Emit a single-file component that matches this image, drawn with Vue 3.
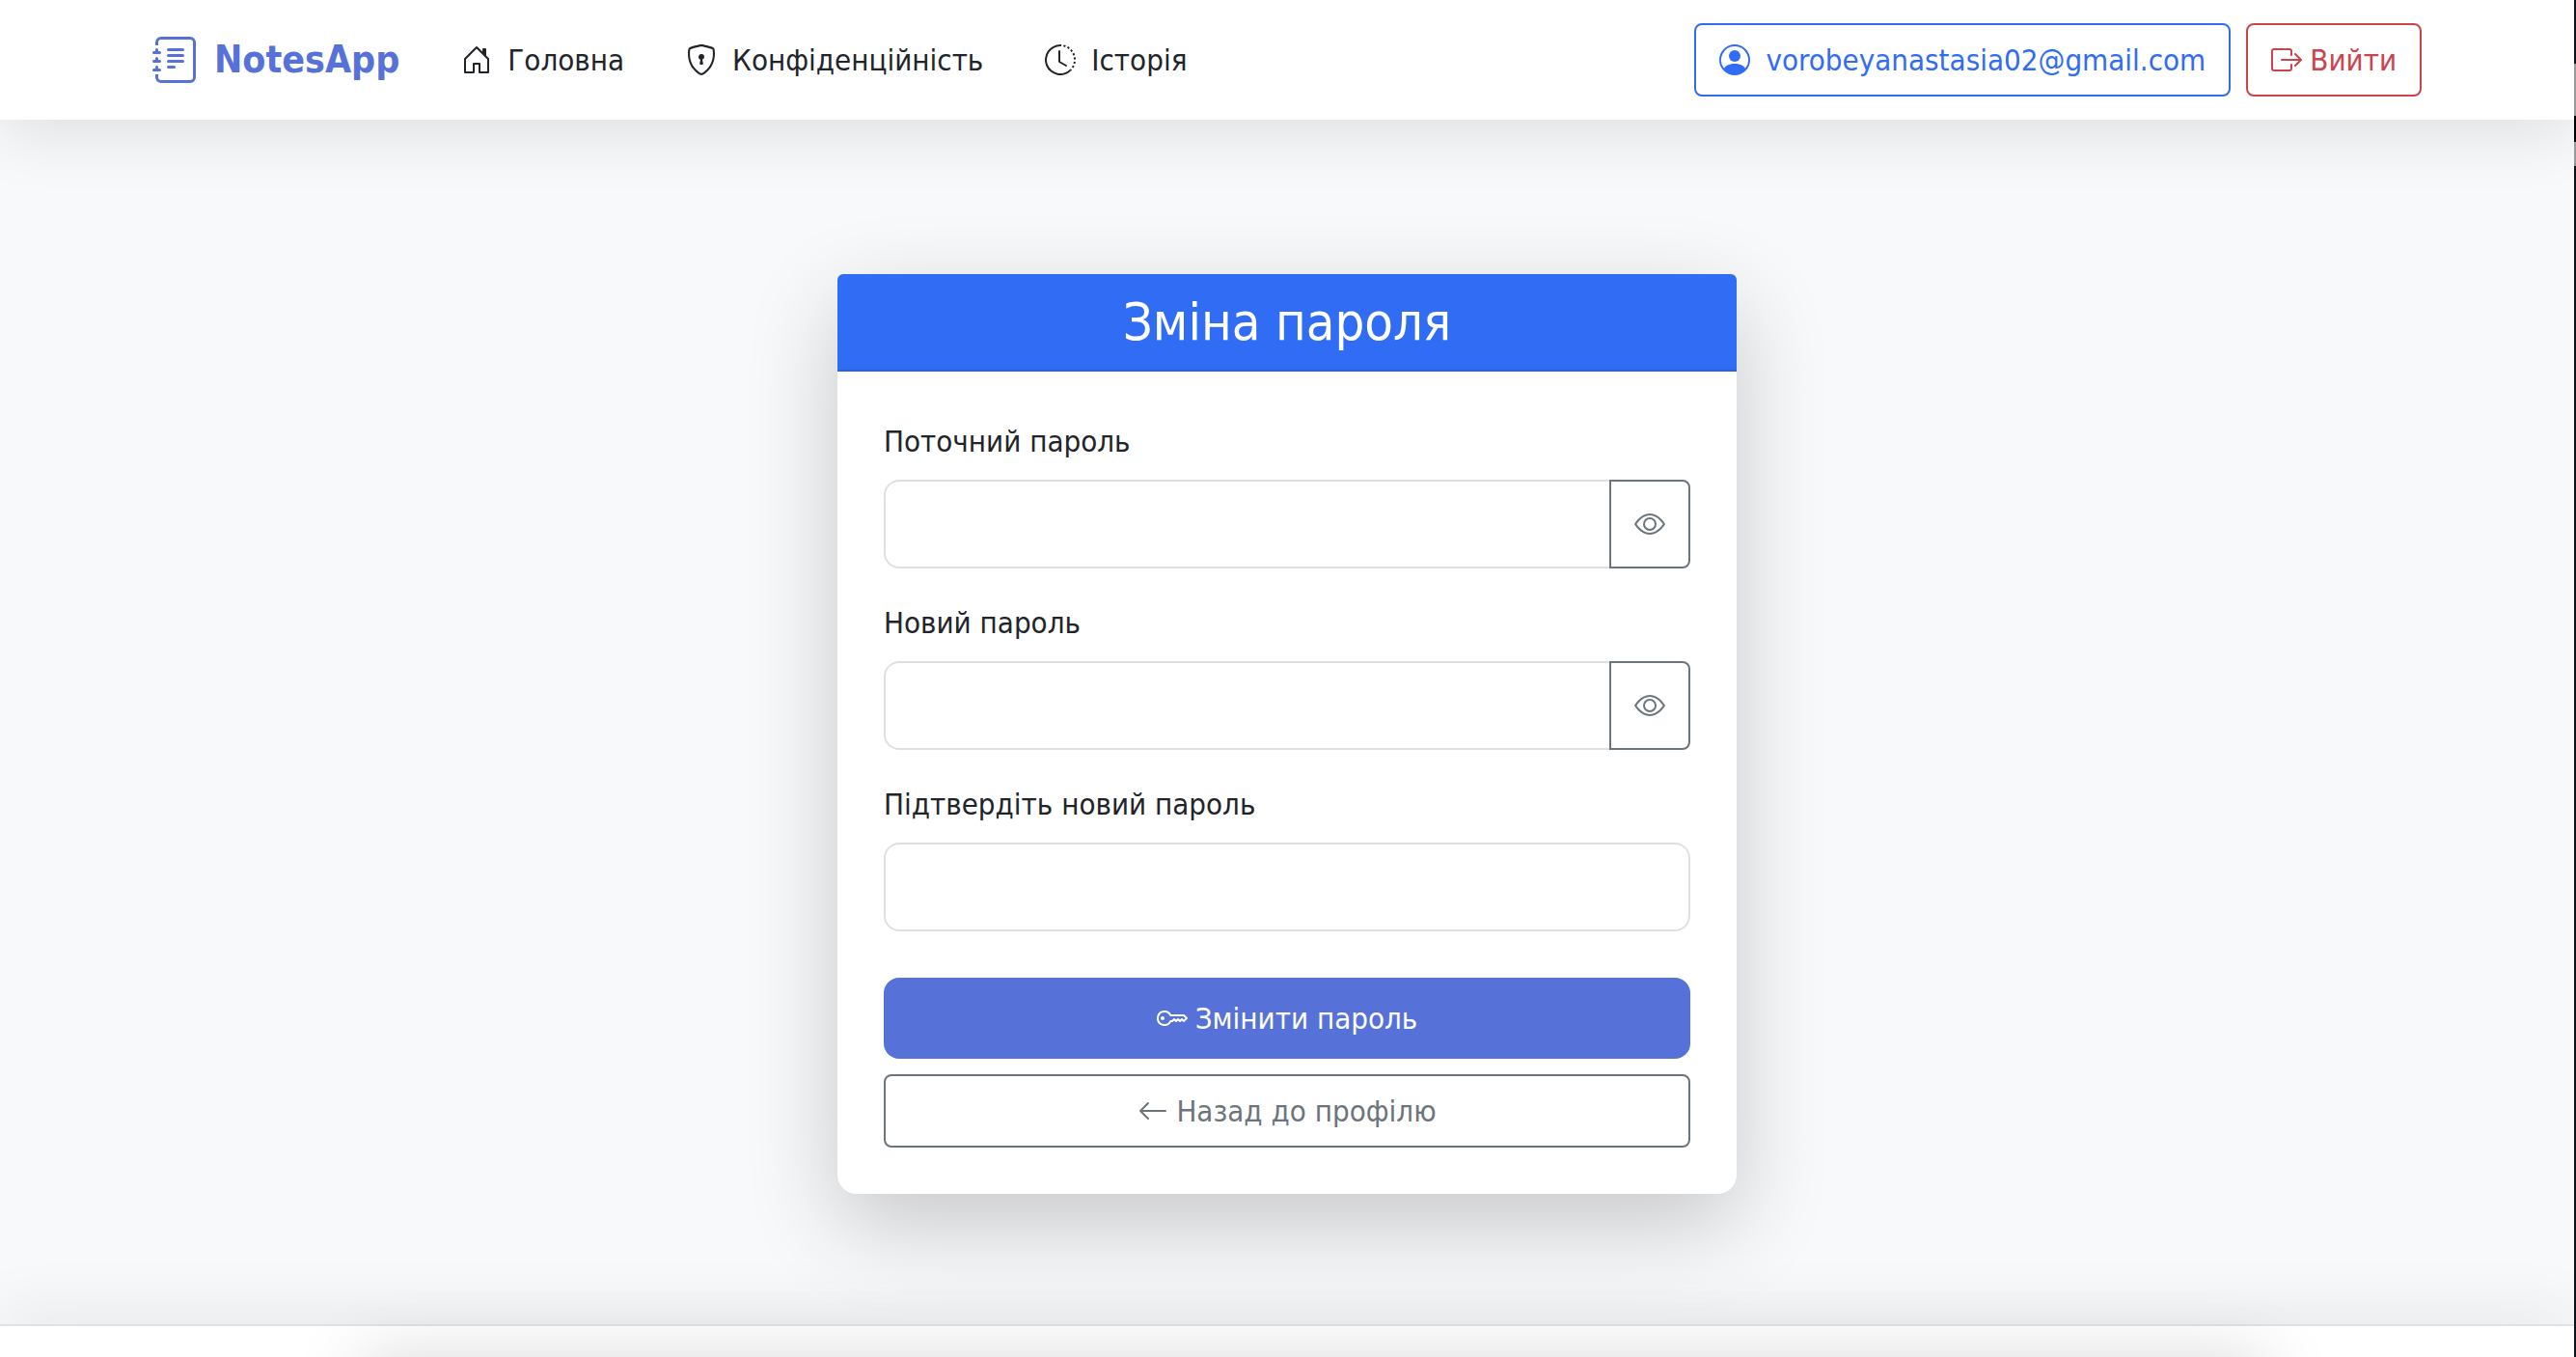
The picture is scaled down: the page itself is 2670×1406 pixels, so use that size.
<script setup>
import { ref, h } from 'vue'

const icons = {
  journal: [
    'M5 10.5a.5.5 0 0 1 .5-.5h2a.5.5 0 0 1 0 1h-2a.5.5 0 0 1-.5-.5m0-2a.5.5 0 0 1 .5-.5h5a.5.5 0 0 1 0 1h-5a.5.5 0 0 1-.5-.5m0-2a.5.5 0 0 1 .5-.5h5a.5.5 0 0 1 0 1h-5a.5.5 0 0 1-.5-.5m0-2a.5.5 0 0 1 .5-.5h5a.5.5 0 0 1 0 1h-5a.5.5 0 0 1-.5-.5',
    'M3 0h10a2 2 0 0 1 2 2v12a2 2 0 0 1-2 2H3a2 2 0 0 1-2-2v-1h1v1a1 1 0 0 0 1 1h10a1 1 0 0 0 1-1V2a1 1 0 0 0-1-1H3a1 1 0 0 0-1 1v1H1V2a2 2 0 0 1 2-2',
    'M1 5v-.5a.5.5 0 0 1 1 0V5h.5a.5.5 0 0 1 0 1h-2a.5.5 0 0 1 0-1zm0 3v-.5a.5.5 0 0 1 1 0V8h.5a.5.5 0 0 1 0 1h-2a.5.5 0 0 1 0-1zm0 3v-.5a.5.5 0 0 1 1 0v.5h.5a.5.5 0 0 1 0 1h-2a.5.5 0 0 1 0-1z',
  ],
  house: [
    'M8.354 1.146a.5.5 0 0 0-.708 0l-6 6A.5.5 0 0 0 1.5 7.5v7a.5.5 0 0 0 .5.5h4.5a.5.5 0 0 0 .5-.5v-4h2v4a.5.5 0 0 0 .5.5H14a.5.5 0 0 0 .5-.5v-7a.5.5 0 0 0-.146-.354L13 5.793V2.5a.5.5 0 0 0-.5-.5h-1a.5.5 0 0 0-.5.5v1.293zM2.5 14V7.707l5.5-5.5 5.5 5.5V14H10v-4a.5.5 0 0 0-.5-.5h-3a.5.5 0 0 0-.5.5v4z',
  ],
  shield: [
    'M5.338 1.59a61 61 0 0 0-2.837.856.48.48 0 0 0-.328.39c-.554 4.157.726 7.19 2.253 9.188a10.7 10.7 0 0 0 2.287 2.233c.346.244.652.42.893.533q.18.085.293.118a1 1 0 0 0 .101.025 1 1 0 0 0 .1-.025q.114-.034.294-.118c.24-.113.547-.29.893-.533a10.7 10.7 0 0 0 2.287-2.233c1.527-1.997 2.807-5.031 2.253-9.188a.48.48 0 0 0-.328-.39c-.651-.213-1.75-.56-2.837-.855C9.552 1.29 8.531 1.067 8 1.067c-.53 0-1.552.223-2.662.524zM5.072.56C6.157.265 7.31 0 8 0s1.843.265 2.928.56c1.11.3 2.229.655 2.887.87a1.54 1.54 0 0 1 1.044 1.262c.596 4.477-.787 7.795-2.465 9.99a11.8 11.8 0 0 1-2.517 2.453 7 7 0 0 1-1.048.625c-.28.132-.581.24-.829.24s-.548-.108-.829-.24a7 7 0 0 1-1.048-.625 11.8 11.8 0 0 1-2.517-2.453C1.928 10.487.545 7.169 1.141 2.692A1.54 1.54 0 0 1 2.185 1.43 63 63 0 0 1 5.072.56',
    'M9.5 6.5a1.5 1.5 0 0 1-1 1.415l.385 1.99a.5.5 0 0 1-.491.595h-.788a.5.5 0 0 1-.49-.595l.384-1.99a1.5 1.5 0 1 1 2-1.415',
  ],
  clock: [
    'M8.515 1.019A7 7 0 0 0 8 1V0a8 8 0 0 1 .589.022zm2.004.45a7 7 0 0 0-.985-.299l.219-.976q.576.129 1.126.342zm1.37.71a7 7 0 0 0-.439-.27l.493-.87a8 8 0 0 1 .979.654l-.615.789a7 7 0 0 0-.418-.302zm1.834 1.79a7 7 0 0 0-.653-.796l.724-.69q.406.429.747.91zm.744 1.352a7 7 0 0 0-.214-.468l.893-.45a8 8 0 0 1 .45 1.088l-.95.313a7 7 0 0 0-.179-.483m.53 2.507a7 7 0 0 0-.1-1.025l.985-.17q.1.58.116 1.17zm-.131 1.538q.05-.254.081-.51l.993.123a8 8 0 0 1-.23 1.155l-.964-.267q.069-.247.12-.501m-.952 2.379q.276-.436.486-.908l.914.405q-.24.54-.555 1.038zm-.964 1.205q.183-.183.35-.378l.758.653a8 8 0 0 1-.401.432z',
    'M8 1a7 7 0 1 0 4.95 11.95l.707.707A8.001 8.001 0 1 1 8 0z',
    'M7.5 3a.5.5 0 0 1 .5.5v5.21l3.248 1.856a.5.5 0 0 1-.496.868l-3.5-2A.5.5 0 0 1 7 9V3.5a.5.5 0 0 1 .5-.5',
  ],
  person: [
    'M11 6a3 3 0 1 1-6 0 3 3 0 0 1 6 0',
    'M0 8a8 8 0 1 1 16 0A8 8 0 0 1 0 8m8-7a7 7 0 0 0-5.468 11.37C3.242 11.226 4.805 10 8 10s4.757 1.225 5.468 2.37A7 7 0 0 0 8 1',
  ],
  exit: [
    'M10 12.5a.5.5 0 0 1-.5.5h-8a.5.5 0 0 1-.5-.5v-9a.5.5 0 0 1 .5-.5h8a.5.5 0 0 1 .5.5v2a.5.5 0 0 0 1 0v-2A1.5 1.5 0 0 0 9.5 2h-8A1.5 1.5 0 0 0 0 3.5v9A1.5 1.5 0 0 0 1.5 14h8a1.5 1.5 0 0 0 1.5-1.5v-2a.5.5 0 0 0-1 0z',
    'M15.854 8.354a.5.5 0 0 0 0-.708l-3-3a.5.5 0 0 0-.708.708L14.293 7.5H5.5a.5.5 0 0 0 0 1h8.793l-2.147 2.146a.5.5 0 0 0 .708.708z',
  ],
  eye: [
    'M16 8s-3-5.5-8-5.5S0 8 0 8s3 5.5 8 5.5S16 8 16 8M1.173 8a13 13 0 0 1 1.66-2.043C4.12 4.668 5.88 3.5 8 3.5s3.879 1.168 5.168 2.457A13 13 0 0 1 14.828 8q-.086.13-.195.288c-.335.48-.83 1.12-1.465 1.755C11.879 11.332 10.119 12.5 8 12.5s-3.879-1.168-5.168-2.457A13 13 0 0 1 1.172 8z',
    'M8 5.5a2.5 2.5 0 1 0 0 5 2.5 2.5 0 0 0 0-5M4.5 8a3.5 3.5 0 1 1 7 0 3.5 3.5 0 0 1-7 0',
  ],
  key: [
    'M0 8a4 4 0 0 1 7.465-2H14a.5.5 0 0 1 .354.146l1.5 1.5a.5.5 0 0 1 0 .708l-1.5 1.5a.5.5 0 0 1-.708 0L13 9.207l-.646.647a.5.5 0 0 1-.708 0L11 9.207l-.646.647a.5.5 0 0 1-.708 0L9 9.207l-.646.647A.5.5 0 0 1 8 10h-.535A4 4 0 0 1 0 8m4-3a3 3 0 1 0 2.712 4.285A.5.5 0 0 1 7.163 9h.63l.853-.854a.5.5 0 0 1 .708 0l.646.647.646-.647a.5.5 0 0 1 .708 0l.646.647.646-.647a.5.5 0 0 1 .708 0l.646.647.793-.793-1-1h-6.63a.5.5 0 0 1-.451-.285A3 3 0 0 0 4 5',
    'M4 8a1 1 0 1 1-2 0 1 1 0 0 1 2 0',
  ],
  arrow: [
    'M15 8a.5.5 0 0 0-.5-.5H2.707l3.147-3.146a.5.5 0 1 0-.708-.708l-4 4a.5.5 0 0 0 0 .708l4 4a.5.5 0 0 0 .708-.708L2.707 8.5H14.5A.5.5 0 0 0 15 8',
  ],
}

const Icon = (props) =>
  h(
    'svg',
    { viewBox: '0 0 16 16', fill: 'currentColor', 'aria-hidden': 'true' },
    icons[props.name].map((d) => h('path', { d, 'fill-rule': d.startsWith('M0 8a8') ? 'evenodd' : 'nonzero' })),
  )
Icon.props = ['name']

const links = [
  { icon: 'house', text: 'Головна' },
  { icon: 'shield', text: 'Конфіденційність' },
  { icon: 'clock', text: 'Історія' },
]

const fields = ref([
  { id: 'current', label: 'Поточний пароль', toggle: true, shown: false, value: '' },
  { id: 'new', label: 'Новий пароль', toggle: true, shown: false, value: '' },
  { id: 'confirm', label: 'Підтвердіть новий пароль', toggle: false, shown: false, value: '' },
])
</script>

<template>
  <div class="page">
    <header class="topbar">
      <div class="container">
        <a class="brand" href="#"><Icon class="icon-lg" name="journal" />NotesApp</a>
        <nav class="links">
          <a v-for="l in links" :key="l.text" class="link" href="#"><Icon class="icon" :name="l.icon" />{{ l.text }}</a>
        </nav>
        <div class="account">
          <a class="btn btn-primary" href="#"><Icon class="icon" name="person" />vorobeyanastasia02@gmail.com</a>
          <button class="btn btn-danger" type="button"><Icon class="icon" name="exit" />Вийти</button>
        </div>
      </div>
    </header>

    <main class="main">
      <section class="card">
        <h1 class="card-title">Зміна пароля</h1>
        <form class="form" @submit.prevent>
          <div v-for="f in fields" :key="f.id" class="field">
            <label :for="f.id">{{ f.label }}</label>
            <div class="group" :class="{ joined: f.toggle }">
              <input :id="f.id" v-model="f.value" :type="f.shown ? 'text' : 'password'" />
              <button v-if="f.toggle" class="eye" type="button" aria-label="Показати пароль" @click="f.shown = !f.shown">
                <Icon class="icon" name="eye" />
              </button>
            </div>
          </div>
          <div class="actions">
            <button class="btn btn-submit" type="submit"><Icon class="icon" name="key" />Змінити пароль</button>
            <a class="btn btn-back" href="#"><Icon class="icon" name="arrow" />Назад до профілю</a>
          </div>
        </form>
      </section>
    </main>

    <footer class="footer"><div class="footer-panel"></div></footer>
    <div class="edge"></div>
  </div>
</template>

<style>
body {
  margin: 0;
}
</style>

<style scoped>
.page {
  position: relative;
  display: flex;
  flex-direction: column;
  min-height: 100vh;
  box-sizing: border-box;
  padding-right: 2px;
  overflow: hidden;
  background: #f8f9fb;
  color: #212529;
  font-family: Tahoma, 'DejaVu Sans Condensed', 'DejaVu Sans', sans-serif;
  font-size: 31px;
  line-height: 48px;
}
.page *,
.page *::before {
  box-sizing: border-box;
}
a {
  color: inherit;
  text-decoration: none;
}
button,
input {
  font: inherit;
}
.icon {
  flex: none;
  width: 32px;
  height: 32px;
}
.icon-lg {
  flex: none;
  width: 48px;
  height: 48px;
}
.topbar {
  background: #fff;
  box-shadow: 0 16px 64px rgba(0, 0, 0, 0.1);
}
.container {
  display: flex;
  align-items: center;
  max-width: 2400px;
  margin: 0 auto;
  padding: 24px;
}
.brand {
  display: flex;
  align-items: center;
  gap: 16px;
  color: #5671d8;
  font-size: 39px;
  font-weight: 700;
}
.links {
  display: flex;
  gap: 64px;
  margin-left: 64px;
}
.link {
  display: flex;
  align-items: center;
  gap: 16px;
}
.account {
  display: flex;
  gap: 16px;
  margin-left: auto;
}
.btn {
  display: flex;
  align-items: center;
  justify-content: center;
  gap: 8px;
  padding: 12px 24px;
  border: 2px solid currentColor;
  border-radius: 8px;
  background: none;
  cursor: pointer;
}
.btn-primary {
  gap: 16px;
  color: #316cf4;
}
.btn-danger {
  color: #cb444a;
}
.main {
  flex: 1;
  padding: 160px 48px 135px;
}
.card {
  max-width: 932px;
  margin: 0 auto;
  border-radius: 8px 8px 20px 20px;
  background: #fff;
  box-shadow: 0 32px 96px rgba(0, 0, 0, 0.2);
}
.card-title {
  margin: 0;
  padding: 16px 32px;
  border-bottom: 2px solid #2c61dc;
  border-radius: 6px 6px 0 0;
  background: #316cf4;
  color: #fff;
  font-size: 54px;
  font-weight: 400;
  line-height: 67px;
  text-align: center;
}
.form {
  padding: 48px;
}
.field {
  display: flex;
  flex-direction: column;
  gap: 16px;
  margin-bottom: 32px;
}
.group {
  display: flex;
}
.group input {
  flex: 1;
  min-width: 0;
  height: 92px;
  padding: 20px 30px;
  border: 2px solid #e0e0e0;
  border-radius: 16px;
  background: #fff;
  outline: none;
}
.joined input {
  border-right: 0;
  border-radius: 16px 0 0 16px;
}
.eye {
  display: flex;
  align-items: center;
  justify-content: center;
  width: 84px;
  padding: 0;
  border: 2px solid #6c757d;
  border-radius: 0 8px 8px 0;
  background: none;
  color: #6c757d;
}
.actions {
  display: flex;
  flex-direction: column;
  gap: 16px;
  padding-top: 16px;
}
.btn-submit {
  padding: 18px 24px;
  border: 0;
  border-radius: 16px;
  background: #5671d8;
  color: #fff;
}
.btn-back {
  color: #6c757d;
}
.footer {
  position: relative;
  height: 34px;
  border-top: 2px solid #dee2e6;
  background: #fff;
  box-shadow: 0 -8px 64px rgba(0, 0, 0, 0.1);
}
/* Panel under the fold: only its shadow reaches up into the footer. */
.footer-panel {
  position: absolute;
  top: 100%;
  left: 14%;
  right: 12%;
  height: 200px;
  box-shadow: 0 0 72px rgba(0, 0, 0, 0.15);
}
.edge {
  position: absolute;
  top: 0;
  right: 0;
  bottom: 0;
  width: 2px;
  background: linear-gradient(#0b1118 66px, #9a9a9a 66px 120px, #000 120px 147px, #9a9a9a 147px 172px, #0b1118 172px);
}
</style>
